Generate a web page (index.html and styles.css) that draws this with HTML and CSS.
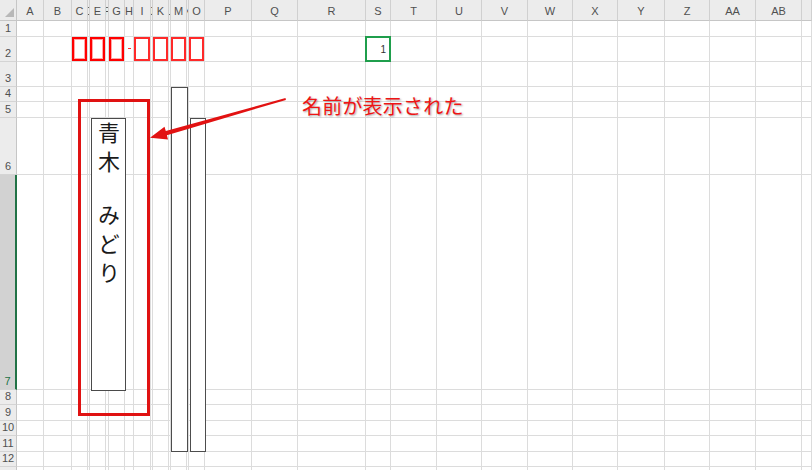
FILE: index.html
```html
<!DOCTYPE html>
<html lang="ja">
<head>
<meta charset="utf-8">
<title>Sheet</title>
<link rel="stylesheet" href="styles.css">
</head>
<body>
<div class="sheet">
  <div class="grid">
    <div class="corner"><span class="tri"></span></div>
    <div class="ch">A</div><div class="ch">B</div><div class="ch">C</div><div class="ch">D</div><div class="ch">E</div><div class="ch">F</div><div class="ch">G</div><div class="ch">H</div><div class="ch">I</div><div class="ch">J</div><div class="ch">K</div><div class="ch">L</div><div class="ch">M</div><div class="ch">N</div><div class="ch">O</div><div class="ch">P</div><div class="ch">Q</div><div class="ch">R</div><div class="ch">S</div><div class="ch">T</div><div class="ch">U</div><div class="ch">V</div><div class="ch">W</div><div class="ch">X</div><div class="ch">Y</div><div class="ch">Z</div><div class="ch">AA</div><div class="ch">AB</div><div class="ch"></div>

    <div class="rh">1</div>
    <div class="c"></div><div class="c"></div><div class="c"></div><div class="c"></div><div class="c"></div><div class="c"></div><div class="c"></div><div class="c"></div><div class="c"></div><div class="c"></div>
    <div class="c"></div><div class="c"></div><div class="c"></div><div class="c"></div><div class="c"></div><div class="c"></div><div class="c"></div><div class="c"></div><div class="c"></div><div class="c"></div>
    <div class="c"></div><div class="c"></div><div class="c"></div><div class="c"></div><div class="c"></div><div class="c"></div><div class="c"></div><div class="c"></div><div class="c"></div>

    <div class="rh">2</div>
    <div class="c"></div><div class="c"></div>
    <div class="c"><span class="tofu"></span></div><div class="c"></div>
    <div class="c"><span class="tofu"></span></div><div class="c"></div>
    <div class="c"><span class="tofu"></span></div>
    <div class="c dashcell"><span class="dash"></span></div>
    <div class="c"><span class="tofu light"></span></div><div class="c"></div>
    <div class="c"><span class="tofu light"></span></div><div class="c"></div>
    <div class="c"><span class="tofu light"></span></div><div class="c"></div>
    <div class="c"><span class="tofu light"></span></div>
    <div class="c"></div><div class="c"></div><div class="c"></div>
    <div class="c sel">1</div>
    <div class="c"></div><div class="c"></div><div class="c"></div><div class="c"></div><div class="c"></div><div class="c"></div><div class="c"></div><div class="c"></div><div class="c"></div><div class="c"></div>

    <div class="rh">3</div>
    <div class="c"></div><div class="c"></div><div class="c"></div><div class="c"></div><div class="c"></div><div class="c"></div><div class="c"></div><div class="c"></div><div class="c"></div><div class="c"></div>
    <div class="c"></div><div class="c"></div><div class="c"></div><div class="c"></div><div class="c"></div><div class="c"></div><div class="c"></div><div class="c"></div><div class="c"></div><div class="c"></div>
    <div class="c"></div><div class="c"></div><div class="c"></div><div class="c"></div><div class="c"></div><div class="c"></div><div class="c"></div><div class="c"></div><div class="c"></div>

    <div class="rh">4</div>
    <div class="c"></div><div class="c"></div><div class="c"></div><div class="c"></div><div class="c"></div><div class="c"></div><div class="c"></div><div class="c"></div><div class="c"></div><div class="c"></div>
    <div class="c"></div><div class="c"></div><div class="c"></div><div class="c"></div><div class="c"></div><div class="c"></div><div class="c"></div><div class="c"></div><div class="c"></div><div class="c"></div>
    <div class="c"></div><div class="c"></div><div class="c"></div><div class="c"></div><div class="c"></div><div class="c"></div><div class="c"></div><div class="c"></div><div class="c"></div>

    <div class="rh">5</div>
    <div class="c"></div><div class="c"></div><div class="c"></div><div class="c"></div><div class="c"></div><div class="c"></div><div class="c"></div><div class="c"></div><div class="c"></div><div class="c"></div>
    <div class="c"></div><div class="c"></div><div class="c"></div><div class="c"></div><div class="c"></div><div class="c"></div><div class="c"></div><div class="c"></div><div class="c"></div><div class="c"></div>
    <div class="c"></div><div class="c"></div><div class="c"></div><div class="c"></div><div class="c"></div><div class="c"></div><div class="c"></div><div class="c"></div><div class="c"></div>

    <div class="rh">6</div>
    <div class="c"></div><div class="c"></div><div class="c"></div><div class="c"></div><div class="c"></div><div class="c"></div><div class="c"></div><div class="c"></div><div class="c"></div><div class="c"></div>
    <div class="c"></div><div class="c"></div><div class="c"></div><div class="c"></div><div class="c"></div><div class="c"></div><div class="c"></div><div class="c"></div><div class="c"></div><div class="c"></div>
    <div class="c"></div><div class="c"></div><div class="c"></div><div class="c"></div><div class="c"></div><div class="c"></div><div class="c"></div><div class="c"></div><div class="c"></div>

    <div class="rh on">7</div>
    <div class="c"></div><div class="c"></div><div class="c"></div><div class="c"></div><div class="c"></div><div class="c"></div><div class="c"></div><div class="c"></div><div class="c"></div><div class="c"></div>
    <div class="c"></div><div class="c"></div><div class="c"></div><div class="c"></div><div class="c"></div><div class="c"></div><div class="c"></div><div class="c"></div><div class="c"></div><div class="c"></div>
    <div class="c"></div><div class="c"></div><div class="c"></div><div class="c"></div><div class="c"></div><div class="c"></div><div class="c"></div><div class="c"></div><div class="c"></div>

    <div class="rh">8</div>
    <div class="c"></div><div class="c"></div><div class="c"></div><div class="c"></div><div class="c"></div><div class="c"></div><div class="c"></div><div class="c"></div><div class="c"></div><div class="c"></div>
    <div class="c"></div><div class="c"></div><div class="c"></div><div class="c"></div><div class="c"></div><div class="c"></div><div class="c"></div><div class="c"></div><div class="c"></div><div class="c"></div>
    <div class="c"></div><div class="c"></div><div class="c"></div><div class="c"></div><div class="c"></div><div class="c"></div><div class="c"></div><div class="c"></div><div class="c"></div>

    <div class="rh">9</div>
    <div class="c"></div><div class="c"></div><div class="c"></div><div class="c"></div><div class="c"></div><div class="c"></div><div class="c"></div><div class="c"></div><div class="c"></div><div class="c"></div>
    <div class="c"></div><div class="c"></div><div class="c"></div><div class="c"></div><div class="c"></div><div class="c"></div><div class="c"></div><div class="c"></div><div class="c"></div><div class="c"></div>
    <div class="c"></div><div class="c"></div><div class="c"></div><div class="c"></div><div class="c"></div><div class="c"></div><div class="c"></div><div class="c"></div><div class="c"></div>

    <div class="rh">10</div>
    <div class="c"></div><div class="c"></div><div class="c"></div><div class="c"></div><div class="c"></div><div class="c"></div><div class="c"></div><div class="c"></div><div class="c"></div><div class="c"></div>
    <div class="c"></div><div class="c"></div><div class="c"></div><div class="c"></div><div class="c"></div><div class="c"></div><div class="c"></div><div class="c"></div><div class="c"></div><div class="c"></div>
    <div class="c"></div><div class="c"></div><div class="c"></div><div class="c"></div><div class="c"></div><div class="c"></div><div class="c"></div><div class="c"></div><div class="c"></div>

    <div class="rh">11</div>
    <div class="c"></div><div class="c"></div><div class="c"></div><div class="c"></div><div class="c"></div><div class="c"></div><div class="c"></div><div class="c"></div><div class="c"></div><div class="c"></div>
    <div class="c"></div><div class="c"></div><div class="c"></div><div class="c"></div><div class="c"></div><div class="c"></div><div class="c"></div><div class="c"></div><div class="c"></div><div class="c"></div>
    <div class="c"></div><div class="c"></div><div class="c"></div><div class="c"></div><div class="c"></div><div class="c"></div><div class="c"></div><div class="c"></div><div class="c"></div>

    <div class="rh">12</div>
    <div class="c"></div><div class="c"></div><div class="c"></div><div class="c"></div><div class="c"></div><div class="c"></div><div class="c"></div><div class="c"></div><div class="c"></div><div class="c"></div>
    <div class="c"></div><div class="c"></div><div class="c"></div><div class="c"></div><div class="c"></div><div class="c"></div><div class="c"></div><div class="c"></div><div class="c"></div><div class="c"></div>
    <div class="c"></div><div class="c"></div><div class="c"></div><div class="c"></div><div class="c"></div><div class="c"></div><div class="c"></div><div class="c"></div><div class="c"></div>

    <div class="rh">13</div>
    <div class="c"></div><div class="c"></div><div class="c"></div><div class="c"></div><div class="c"></div><div class="c"></div><div class="c"></div><div class="c"></div><div class="c"></div><div class="c"></div>
    <div class="c"></div><div class="c"></div><div class="c"></div><div class="c"></div><div class="c"></div><div class="c"></div><div class="c"></div><div class="c"></div><div class="c"></div><div class="c"></div>
    <div class="c"></div><div class="c"></div><div class="c"></div><div class="c"></div><div class="c"></div><div class="c"></div><div class="c"></div><div class="c"></div><div class="c"></div>
  </div>

  <div class="frame"></div>
  <div class="vbox">青木<span class="given">みどり</span></div>
  <div class="bar bar1"></div>
  <div class="bar bar2"></div>
  <svg class="arrow" width="812" height="470" viewBox="0 0 812 470">
    <polygon points="150,137.7 168,139.6 166.9,135.2 285.9,99.9 285.5,98.1 165.8,130.9 164.5,126.8" fill="#e21212"/>
  </svg>
  <div class="note">名前が表示された</div>
</div>
</body>
</html>
```
FILE: styles.css
```css
html, body {
  margin: 0;
  padding: 0;
}
body {
  width: 812px;
  height: 470px;
  overflow: hidden;
  background: #ffffff;
  font-family: "Liberation Sans", Arial, sans-serif;
}
.sheet {
  position: relative;
  width: 812px;
  height: 470px;
  overflow: hidden;
}
.grid {
  display: grid;
  grid-template-columns: 17px 27px 28px 16px 2px 16px 3px 16px 9px 17px 2px 16px 2px 16px 2px 16px 47px 46px 68px 25px 46px 45px 46px 45px 45px 47px 45px 46px 46px 10px;
  grid-template-rows: 21px 16px 25px 25px 15px 16px 57px 215px 15px 16px 15px 16px 15px 20px;
}
.grid > div {
  box-sizing: border-box;
  min-width: 0;
  overflow: hidden;
}
.corner {
  background: #ebebeb;
  border-right: 1px solid #c6c6c6;
  border-bottom: 1px solid #c6c6c6;
  display: flex;
  justify-content: flex-end;
  align-items: flex-end;
  padding: 0 2px 3px 0;
}
.tri {
  width: 0;
  height: 0;
  border-left: 9px solid transparent;
  border-bottom: 9px solid #b8b8b8;
}
.ch {
  background: #ececec;
  border-right: 1px solid #d0d0d0;
  border-bottom: 1px solid #c6c6c6;
  display: flex;
  align-items: center;
  justify-content: center;
  font-size: 11px;
  color: #505050;
  white-space: nowrap;
  padding-top: 1px;
}
.rh {
  background: #ececec;
  border-right: 1px solid #c6c6c6;
  border-bottom: 1px solid #d4d4d4;
  display: flex;
  align-items: flex-end;
  justify-content: center;
  font-size: 11px;
  color: #505050;
  white-space: nowrap;
  line-height: 13px;
  padding-bottom: 1px;
}
.rh.on {
  background: #d2d2d2;
  color: #217346;
  border-right: 2px solid #217346;
}
.c {
  border-right: 1px solid #dcdcdc;
  border-bottom: 1px solid #dcdcdc;
}
.tofu {
  display: block;
  height: 100%;
  box-sizing: border-box;
  border: 2px solid #ff0000;
  box-shadow: inset 0 0 0 1px rgba(255, 60, 60, 0.45);
}
.tofu.light {
  border-color: #ff2a2a;
  box-shadow: none;
}
.dashcell {
  display: flex;
  align-items: center;
  padding-left: 3px;
  padding-bottom: 1px;
}
.dash {
  display: block;
  width: 3px;
  height: 1px;
  background: #ff3030;
}
.grid > .sel {
  position: relative;
  overflow: visible;
  display: flex;
  align-items: center;
  justify-content: flex-end;
  padding-right: 4px;
  font-size: 10px;
  color: #333333;
}
.sel::after {
  content: "";
  position: absolute;
  left: -1px;
  top: -1px;
  right: -1px;
  bottom: -1px;
  border: 2px solid #1f9e4c;
}
.frame {
  position: absolute;
  left: 78px;
  top: 99px;
  width: 72px;
  height: 317px;
  box-sizing: border-box;
  border: 3px solid #e01212;
}
.vbox {
  position: absolute;
  left: 91px;
  top: 118px;
  width: 35px;
  height: 273px;
  box-sizing: border-box;
  border: 1px solid #4a4a4a;
  background: #ffffff;
  writing-mode: vertical-rl;
  font-family: "Noto Sans CJK JP", "Noto Sans CJK SC", sans-serif;
  font-size: 22px;
  letter-spacing: 7px;
  line-height: 33px;
  padding-top: 3px;
  color: #1a1a1a;
}
.given {
  margin-inline-start: 24px;
}
.bar {
  position: absolute;
  box-sizing: border-box;
  border: 1px solid #4d4d4d;
  background: #ffffff;
}
.bar1 {
  left: 171px;
  top: 87px;
  width: 17px;
  height: 365px;
}
.bar2 {
  left: 190px;
  top: 118px;
  width: 16px;
  height: 334px;
}
.arrow {
  position: absolute;
  left: 0;
  top: 0;
}
.note {
  position: absolute;
  left: 302px;
  top: 94px;
  font-family: "Noto Sans CJK JP", "Noto Sans CJK SC", sans-serif;
  font-size: 20px;
  line-height: 24px;
  letter-spacing: 0.2px;
  color: #ee1515;
  white-space: nowrap;
  text-shadow: 1px 1px 2px rgba(0, 0, 0, 0.35);
}
```
